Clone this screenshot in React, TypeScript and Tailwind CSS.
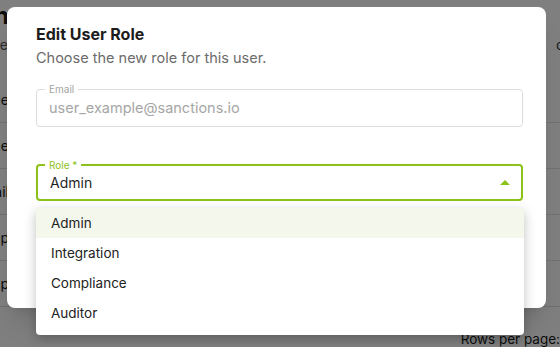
import React from 'react';

const roles = ['Admin', 'Integration', 'Compliance', 'Auditor'];

// rows of the users table that sits behind the dialog
const backgroundRows = ['Blue', 'True', 'Email', 'Setup', 'Group'];

function CaretUp() {
  return (
    <svg width="10" height="5" viewBox="0 0 10 5" className="text-[#8cc21a]">
      <path d="M0 5 L5 0 L10 5 Z" fill="currentColor" />
    </svg>
  );
}

export default function App() {
  const selected = 'Admin';

  return (
    <div className="relative w-[560px] h-[347px] overflow-hidden bg-white font-['Inter',sans-serif] text-[#1a1a1a]">
      {/* Page behind the modal */}
      <div className="flex flex-col h-full">
        <div className="flex justify-between h-[32px] items-center">
          <div className="w-[9px] overflow-hidden flex justify-end whitespace-nowrap text-2xl font-bold">Admin</div>
        </div>
        <div className="flex justify-between h-[26px] items-center">
          <div className="w-[8px] overflow-hidden flex justify-end whitespace-nowrap text-sm text-[#555]">Name</div>
          <div className="w-[4px] overflow-hidden flex justify-start whitespace-nowrap text-sm text-[#333]">create</div>
        </div>
        <div className="flex flex-col mt-[19px]">
          {backgroundRows.map((r, i) => (
            <div key={i} className="h-[46px] border-b border-[#e0e0e0] flex items-center">
              <div className="w-[9px] overflow-hidden flex justify-end whitespace-nowrap text-sm">{r}</div>
            </div>
          ))}
        </div>
        <div className="mt-auto flex justify-end h-[16px] items-center">
          <span className="text-[13.5px] whitespace-nowrap">Rows per page:</span>
        </div>
      </div>

      {/* Overlay */}
      <div className="absolute inset-0 bg-black/50" />

      {/* Dialog */}
      <div className="absolute left-[7px] top-[7px] w-[539px] h-[301px] rounded-lg bg-white shadow-xl pl-[29px] pr-[23px] pt-[15px]">
        <h2 className="text-base font-bold leading-6 text-[#1c1c1c]">Edit User Role</h2>
        <p className="mt-[2px] text-[14.5px] leading-5 text-[#6b6b6b]">Choose the new role for this user.</p>

        <div className="relative mt-[21px] h-[38px] rounded border border-[#dcdcdc] flex items-center px-[12px]">
          <span className="absolute -top-[7px] left-[8px] bg-white px-[4px] text-[10px] leading-3 text-[#a3a3a3]">Email</span>
          <span className="text-[14.5px] text-[#a6a6a6]">user_example@sanctions.io</span>
        </div>

        <div className="relative mt-[37px] h-[37px] rounded border-2 border-[#8cc21a] flex items-center justify-between pl-[12px] pr-[11px]">
          <span className="absolute -top-[7px] left-[7px] bg-white px-[4px] text-[10px] leading-3 text-[#8cc21a]">Role *</span>
          <span className="text-sm text-[#1f1f1f]">{selected}</span>
          <CaretUp />
        </div>
      </div>

      {/* Open role menu */}
      <div className="absolute left-[36px] top-[208px] w-[488px] rounded-b bg-white shadow-[0_4px_12px_rgba(0,0,0,0.25)] pb-[7px]">
        {roles.map(role => (
          <div
            key={role}
            className={`h-[30px] flex items-center px-[15px] text-[13.5px] text-[#222] ${role === selected ? 'bg-[#f4f7ec]' : ''}`}
          >
            {role}
          </div>
        ))}
      </div>
    </div>
  );
}
